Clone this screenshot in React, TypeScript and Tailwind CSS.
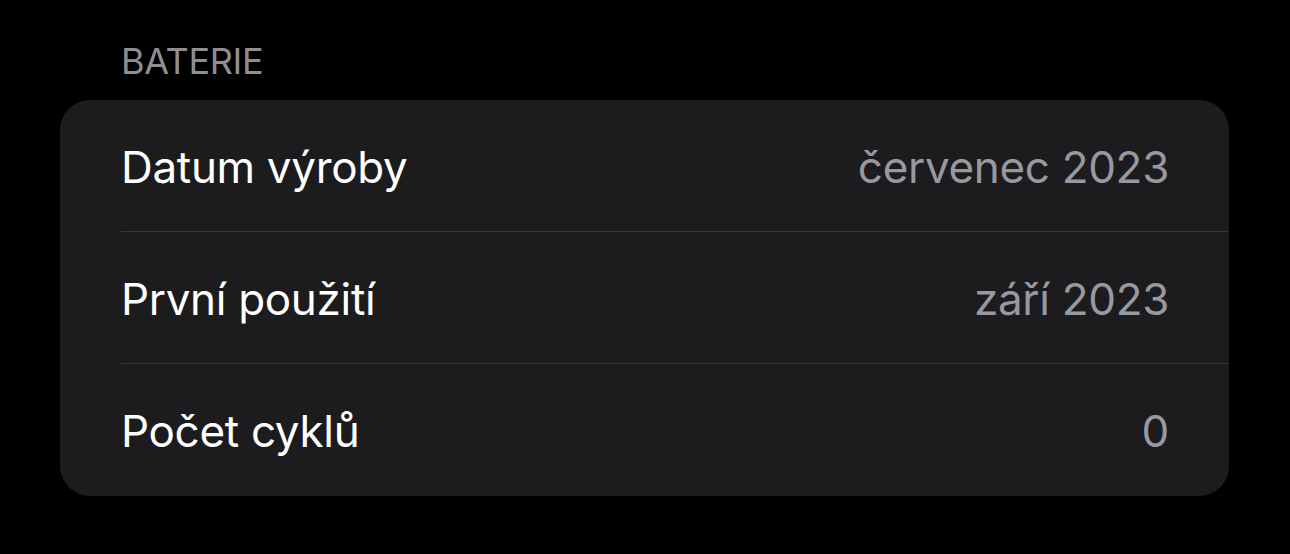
const rows = [
  { label: "Datum výroby", value: "červenec 2023" },
  { label: "První použití", value: "září 2023" },
  { label: "Počet cyklů", value: "0" },
];

export default function App() {
  return (
    <div
      className="min-h-[554px] w-full bg-black pl-[60px] pr-[61px] pt-[43px]"
      style={{ fontFamily: "Inter, 'Noto Sans', sans-serif" }}
    >
      {/* Section header */}
      <div className="pl-[61px] text-[36px] leading-[36px] tracking-[-0.01em] text-[#8e8e93]">
        BATERIE
      </div>

      {/* Card */}
      <div className="mt-[21px] overflow-hidden rounded-[30px] bg-[#1c1c1e]">
        {rows.map((row, i) => (
          <div key={row.label} className="pl-[61px]">
            <div
              className={`flex h-[132px] items-center justify-between pr-[60px] pt-[2px] tracking-[-0.02em] ${
                i < rows.length - 1 ? "border-b border-[#38383a]" : ""
              }`}
            >
              <span className="text-[44px] text-white">{row.label}</span>
              <span className="text-[44px] text-[#98989f]">{row.value}</span>
            </div>
          </div>
        ))}
      </div>
    </div>
  );
}
